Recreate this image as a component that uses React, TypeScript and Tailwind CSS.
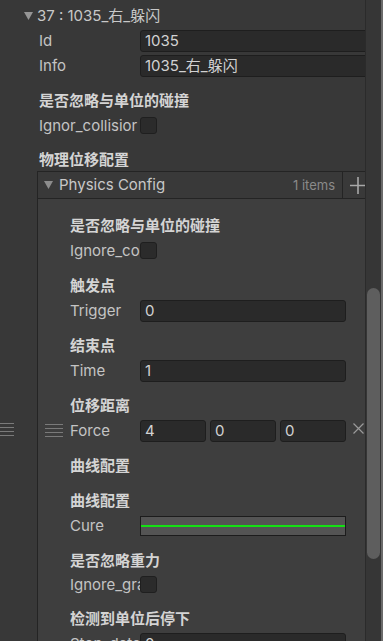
import React from "react";

const Tri = ({ className }: { className: string }) => (
  <svg width="9" height="8" viewBox="0 0 9 8" className={className}>
    <path d="M0 0 L9 0 L4.5 8 Z" fill="currentColor" />
  </svg>
);

const Handle = ({ w }: { w: string }) => (
  <div className={`flex flex-col gap-[3px] ${w}`}>
    <div className="h-px bg-[#7a7a7a]" />
    <div className="h-px bg-[#7a7a7a]" />
    <div className="h-px bg-[#7a7a7a]" />
    <div className="h-px bg-[#7a7a7a]" />
  </div>
);

const Field = ({ value, className = "" }: { value: string; className?: string }) => (
  <div
    className={`h-[22px] rounded-[3px] bg-[#2a2a2a] border border-[#1e1e1e] pl-[4px] flex items-center text-[#d2d2d2] whitespace-nowrap ${className}`}
  >
    {value}
  </div>
);

const Check = () => (
  <div className="w-[17px] h-[17px] rounded-[3px] bg-[#2b2b2b] border border-[#1f1f1f] shrink-0" />
);

const Label = ({ text, w }: { text: string; w: string }) => (
  <div className={`${w} shrink-0 overflow-hidden whitespace-nowrap text-[#c4c4c4]`}>{text}</div>
);

const Header = ({ text, h = "h-[25px]" }: { text: string; h?: string }) => (
  <div className={`${h} flex items-center font-bold text-[#d4d4d4] whitespace-nowrap`}>{text}</div>
);

export default function App() {
  return (
    <div className="w-[383px] h-[641px] overflow-hidden bg-[#383838] flex text-[15px] leading-[20px] font-['Inter','Noto_Sans_CJK_SC',sans-serif]">
      <div className="w-[365px] shrink-0 overflow-hidden pt-[3px]">
        {/* element title */}
        <div className="h-[25px] flex items-center pl-[24px] gap-[4px] text-[#c8c8c8] whitespace-nowrap">
          <Tri className="text-[#959595]" />
          <span>37 : 1035_右_躲闪</span>
        </div>
        <div className="h-[25px] flex items-center pl-[39px]">
          <Label text="Id" w="w-[101px]" />
          <Field value="1035" className="w-[240px] shrink-0" />
        </div>
        <div className="h-[25px] flex items-center pl-[39px]">
          <Label text="Info" w="w-[101px]" />
          <Field value="1035_右_躲闪" className="w-[240px] shrink-0" />
        </div>

        <div className="pl-[39px] mt-[10px]">
          <Header text="是否忽略与单位的碰撞" />
          <div className="h-[25px] flex items-center">
            <Label text="Ignor_collisior" w="w-[101px]" />
            <Check />
          </div>
        </div>

        <div className="pl-[39px] mt-[10px]">
          <Header text="物理位移配置" h="h-[23px]" />
        </div>

        {/* list */}
        <div className="flex">
          <div className="w-[37px] shrink-0 pt-[252px]">
            <Handle w="w-[14px]" />
          </div>
          <div className="w-[330px] shrink-0">
            <div className="h-[28px] flex items-center border-y border-l border-[#242424] bg-[#393939] pl-[6px]">
              <Tri className="text-[#8c8c8c] shrink-0" />
              <span className="ml-[6px] text-[#c8c8c8] whitespace-nowrap">Physics Config</span>
              <span className="ml-auto text-[13px] text-[#8a8a8a] whitespace-nowrap">1 items</span>
              <div className="ml-[7px] w-px self-stretch bg-[#242424]" />
              <svg width="16" height="17" viewBox="0 0 16 17" className="ml-[7px] mr-[1px] text-[#a8a8a8]">
                <path d="M8 0 V17 M0 8.5 H16" stroke="currentColor" strokeWidth="1.6" />
              </svg>
            </div>

            <div className="border-l border-[#242424] bg-[#3e3e3e] pt-[4px] pl-[32px] pb-[20px]">
              <div className="mt-[10px]">
                <Header text="是否忽略与单位的碰撞" />
                <div className="h-[25px] flex items-center">
                  <Label text="Ignore_collision" w="w-[70px]" />
                  <Check />
                </div>
              </div>

              <div className="mt-[10px]">
                <Header text="触发点" />
                <div className="h-[25px] flex items-center">
                  <Label text="Trigger" w="w-[70px]" />
                  <Field value="0" className="w-[206px]" />
                </div>
              </div>

              <div className="mt-[10px]">
                <Header text="结束点" />
                <div className="h-[25px] flex items-center">
                  <Label text="Time" w="w-[70px]" />
                  <Field value="1" className="w-[206px]" />
                </div>
              </div>

              <div className="mt-[10px]">
                <Header text="位移距离" />
                <div className="h-[25px] flex items-center -ml-[25px]">
                  <Handle w="w-[18px] mr-[7px] shrink-0" />
                  <Label text="Force" w="w-[70px]" />
                  <div className="flex gap-[4px]">
                    <Field value="4" className="w-[66px]" />
                    <Field value="0" className="w-[66px]" />
                    <Field value="0" className="w-[66px]" />
                  </div>
                  <svg width="11" height="11" viewBox="0 0 11 11" className="ml-[7px] -mt-[5px] text-[#9a9a9a]">
                    <path d="M0.5 0.5 L10.5 10.5 M10.5 0.5 L0.5 10.5" stroke="currentColor" strokeWidth="1.2" />
                  </svg>
                </div>
              </div>

              <div className="mt-[10px]">
                <Header text="曲线配置" />
              </div>

              <div className="mt-[10px]">
                <Header text="曲线配置" />
                <div className="h-[25px] flex items-center">
                  <Label text="Cure" w="w-[70px]" />
                  <div className="w-[206px] h-[20px] bg-[#545454] border border-[#1c1c1c] flex items-center">
                    <div className="w-full h-[2px] bg-[#14e014]" />
                  </div>
                </div>
              </div>

              <div className="mt-[10px]">
                <Header text="是否忽略重力" />
                <div className="h-[23px] flex items-center">
                  <Label text="Ignore_gravity" w="w-[70px]" />
                  <Check />
                </div>
              </div>

              <div className="mt-[10px]">
                <Header text="检测到单位后停下" />
                <div className="h-[25px] flex items-center">
                  <Label text="Stop_detect" w="w-[70px]" />
                  <Field value="0" className="w-[206px]" />
                </div>
              </div>
            </div>
          </div>
        </div>
      </div>

      {/* scrollbar */}
      <div className="w-[16px] shrink-0 bg-[#363636] border-l border-[#2b2b2b] pt-[288px] flex flex-col items-center">
        <div className="w-[13px] h-[271px] rounded-full bg-[#5e5e5e]" />
      </div>
      <div className="w-[2px] shrink-0 bg-[#6a6a6a]" />
    </div>
  );
}
